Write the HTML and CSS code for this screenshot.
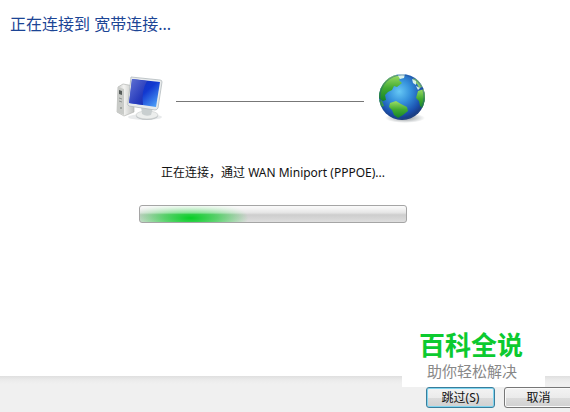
FILE: index.html
```
<!DOCTYPE html>
<html lang="zh-CN">
<head>
    <meta charset="UTF-8">
    <meta name="viewport" content="width=device-width, initial-scale=1.0">
    <title>宽带连接</title>
    <link rel="stylesheet" href="styles.css">
</head>
<body>
    <h1 class="titulo">正在连接到 宽带连接...</h1>

    <main class="contenido">
        <div class="enlace">
            <svg class="icono" viewBox="0 0 50 54" aria-hidden="true">
                <defs>
                    <linearGradient id="pantalla" x1="0" y1="0" x2="1" y2="1">
                        <stop offset="0" stop-color="#1730b4"/>
                        <stop offset=".5" stop-color="#1238d0"/>
                        <stop offset="1" stop-color="#58b2ff"/>
                    </linearGradient>
                    <linearGradient id="torre" x1="0" y1="0" x2="1" y2="0">
                        <stop offset="0" stop-color="#c2c4c2"/>
                        <stop offset=".4" stop-color="#f3f3f1"/>
                        <stop offset="1" stop-color="#bfc1bf"/>
                    </linearGradient>
                    <linearGradient id="brillo" x1="0" y1="0" x2="1" y2="1">
                        <stop offset="0" stop-color="#7585dc"/>
                        <stop offset="1" stop-color="#0716a4"/>
                    </linearGradient>
                </defs>
                <ellipse cx="31" cy="46" rx="17" ry="3" fill="#d9dcdd" opacity=".6"/>
                <path d="M4 16 L9 13 L20 15 L20 41 L10 45 L3 41Z" fill="url(#torre)" stroke="#b6b8b5" stroke-width=".7"/>
                <path d="M4 16 L10 18 L10 44 L3 41Z" fill="#c9cbc8"/>
                <path d="M5 19 L8 20 L8 24 L5 23Z" fill="#555b59"/>
                <path d="M5 27 L8 28 M5 30 L8 31" stroke="#8f9592"/>
                <circle cx="7" cy="37" r="1" fill="#8f9692"/>
                <ellipse cx="33" cy="45" rx="11" ry="4" fill="#bfc4c7"/>
                <ellipse cx="33" cy="44" rx="11" ry="4" fill="#eceeed" stroke="#c6caca" stroke-width=".6"/>
                <path d="M27 35 L39 37 L37 44 Q32 46 28 43Z" fill="#c9cfd0"/>
                <path d="M17 6 L46 9 Q48 9 48 11 L44 37 Q43 39 41 39 L15 35 Q13 34 14 32Z" fill="#e8ebec" stroke="#b3babe" stroke-width=".8"/>
                <path d="M18 8 L46 11 L42 36 L15 32Z" fill="url(#pantalla)"/>
                <path d="M18 8 L33 10 Q27 20 29 34 L15 32Z" fill="url(#brillo)" opacity=".8"/>
            </svg>
            <span class="linea"></span>
            <svg class="icono" viewBox="0 0 50 54" aria-hidden="true">
                <defs>
                    <radialGradient id="mar" cx=".44" cy=".38" r=".62">
                        <stop offset="0" stop-color="#66c8f5"/>
                        <stop offset=".4" stop-color="#3591dc"/>
                        <stop offset=".8" stop-color="#1b50ae"/>
                        <stop offset="1" stop-color="#193779"/>
                    </radialGradient>
                    <linearGradient id="tierra" x1="0" y1="0" x2="0" y2="1">
                        <stop offset="0" stop-color="#9dde65"/>
                        <stop offset=".5" stop-color="#42aa31"/>
                        <stop offset="1" stop-color="#148328"/>
                    </linearGradient>
                    <radialGradient id="sombra">
                        <stop offset="0" stop-color="#8b9296"/>
                        <stop offset="1" stop-color="#ffffff"/>
                    </radialGradient>
                    <clipPath id="esfera"><circle cx="26" cy="26" r="23"/></clipPath>
                </defs>
                <ellipse cx="29" cy="47" rx="20" ry="5" fill="url(#sombra)"/>
                <circle cx="26" cy="26" r="23" fill="url(#mar)"/>
                <g clip-path="url(#esfera)">
                    <path d="M2 21 Q7 8 18 4 L26 5 L23 9 L26 12 L21 16 L18 15 L16 19 L12 21 L9 24 L10 29 L7 30 L2 27Z" fill="url(#tierra)"/>
                    <path d="M14 32 L20 30 L25 33 L31 36 L32 40 L27 44 L22 47 L18 44 L16 39 L13 36Z" fill="url(#tierra)"/>
                    <path d="M42 20 L48 18 L51 28 L47 38 L44 35 L43 30 L40 27Z" fill="url(#tierra)"/>
                    <path d="M37 7 L42 9 L47 16 L43 17 L41 13 L38 12Z" fill="#86c66a"/>
                    <path d="M21 3 L29 3 L28 7 L24 8Z M36 8 L40 10 L40 14 L37 12Z M40 15 L44 17 L42 19Z" fill="#d9f1e9"/>
                    <path d="M2 28 L6 30 L8 35 L5 36Z" fill="#3c9f42"/>
                </g>
                <circle cx="26" cy="26" r="22" fill="none" stroke="#214f92" opacity=".5"/>
            </svg>
        </div>

        <label class="estado" for="progreso">正在连接，通过 WAN Miniport (PPPOE)...</label>
        <progress class="progreso" id="progreso"></progress>
    </main>

    <footer class="pie">
        <div class="marca">
            <strong class="marca-nombre">百科全说</strong>
            <span class="marca-lema">助你轻松解决</span>
        </div>
        <button class="boton boton-activo" type="button">跳过(S)</button>
        <button class="boton" type="button">取消</button>
    </footer>
</body>
</html>
```
FILE: styles.css
```
* { box-sizing: border-box; }
body {
    display: flex;
    flex-direction: column;
    min-height: 100vh;
    margin: 0;
    overflow: hidden;
    background: #fff;
    color: #111;
    font-family: "Noto Sans", "Noto Sans CJK SC", sans-serif;
    font-size: 12px;
}
.titulo {
    margin: 0;
    padding: 12px 10px 0;
    color: #1c4595;
    font-size: 16px;
    font-weight: normal;
    line-height: 24px;
}
.contenido {
    display: flex;
    flex: 1;
    flex-direction: column;
    align-items: center;
    padding: 35px 24px 0 0;
}
.enlace {
    display: flex;
    align-items: center;
    gap: 12px;
    width: 57%;
    margin-right: 6px;
}
.icono { flex: none; width: 50px; height: 54px; }
.linea { flex: 1; height: 1px; margin-top: 6px; background: #777; }
.estado { margin-top: 38px; line-height: 20px; }
.progreso {
    appearance: none;
    width: 49%;
    height: 18px;
    margin-top: 22px;
    overflow: hidden;
    border: 1px solid #a5a5a5;
    border-radius: 3px;
    background:
        linear-gradient(rgba(255, 255, 255, .85), rgba(255, 255, 255, .35) 45%, transparent 50%),
        radial-gradient(ellipse 58px 18px at 19% 75%, #06cf25, rgba(6, 207, 37, .6) 45%, transparent),
        linear-gradient(#e2e2e2, #cfcfcf 60%, #dedede);
}
.progreso::-webkit-progress-bar { background: transparent; }
.pie {
    position: relative;
    display: flex;
    justify-content: flex-end;
    gap: 9px;
    height: 36px;
    padding-top: 11px;
    margin-right: -3px;
    background: linear-gradient(#dfdfdf, #ebebeb 4px, #f0f0f0 8px);
}
.boton {
    width: 69px;
    height: 21px;
    padding: 0;
    border: 1px solid #777;
    border-radius: 3px;
    background: linear-gradient(#f3f3f3, #ebebeb 50%, #dcdcdc 50%, #d0d0d0);
    box-shadow: inset 0 0 0 1px #fafafa;
    color: #111;
    font: inherit;
    line-height: 18px;
}
.boton-activo {
    border-color: #397d9b;
    box-shadow: inset 0 0 0 1px #80d5f0;
}
/* sello sobre el borde del pie */
.marca {
    position: absolute;
    right: 28px;
    bottom: 25px;
    display: flex;
    flex-direction: column;
    width: 143px;
    height: 67px;
    padding: 8px 0 0 17px;
    background: #fff;
}
.marca-nombre {
    color: #0cca2f;
    font-size: 26px;
    font-weight: bold;
    line-height: 34px;
}
.marca-lema {
    padding-left: 8px;
    color: #888;
    font-size: 15px;
    line-height: 18px;
}
```
